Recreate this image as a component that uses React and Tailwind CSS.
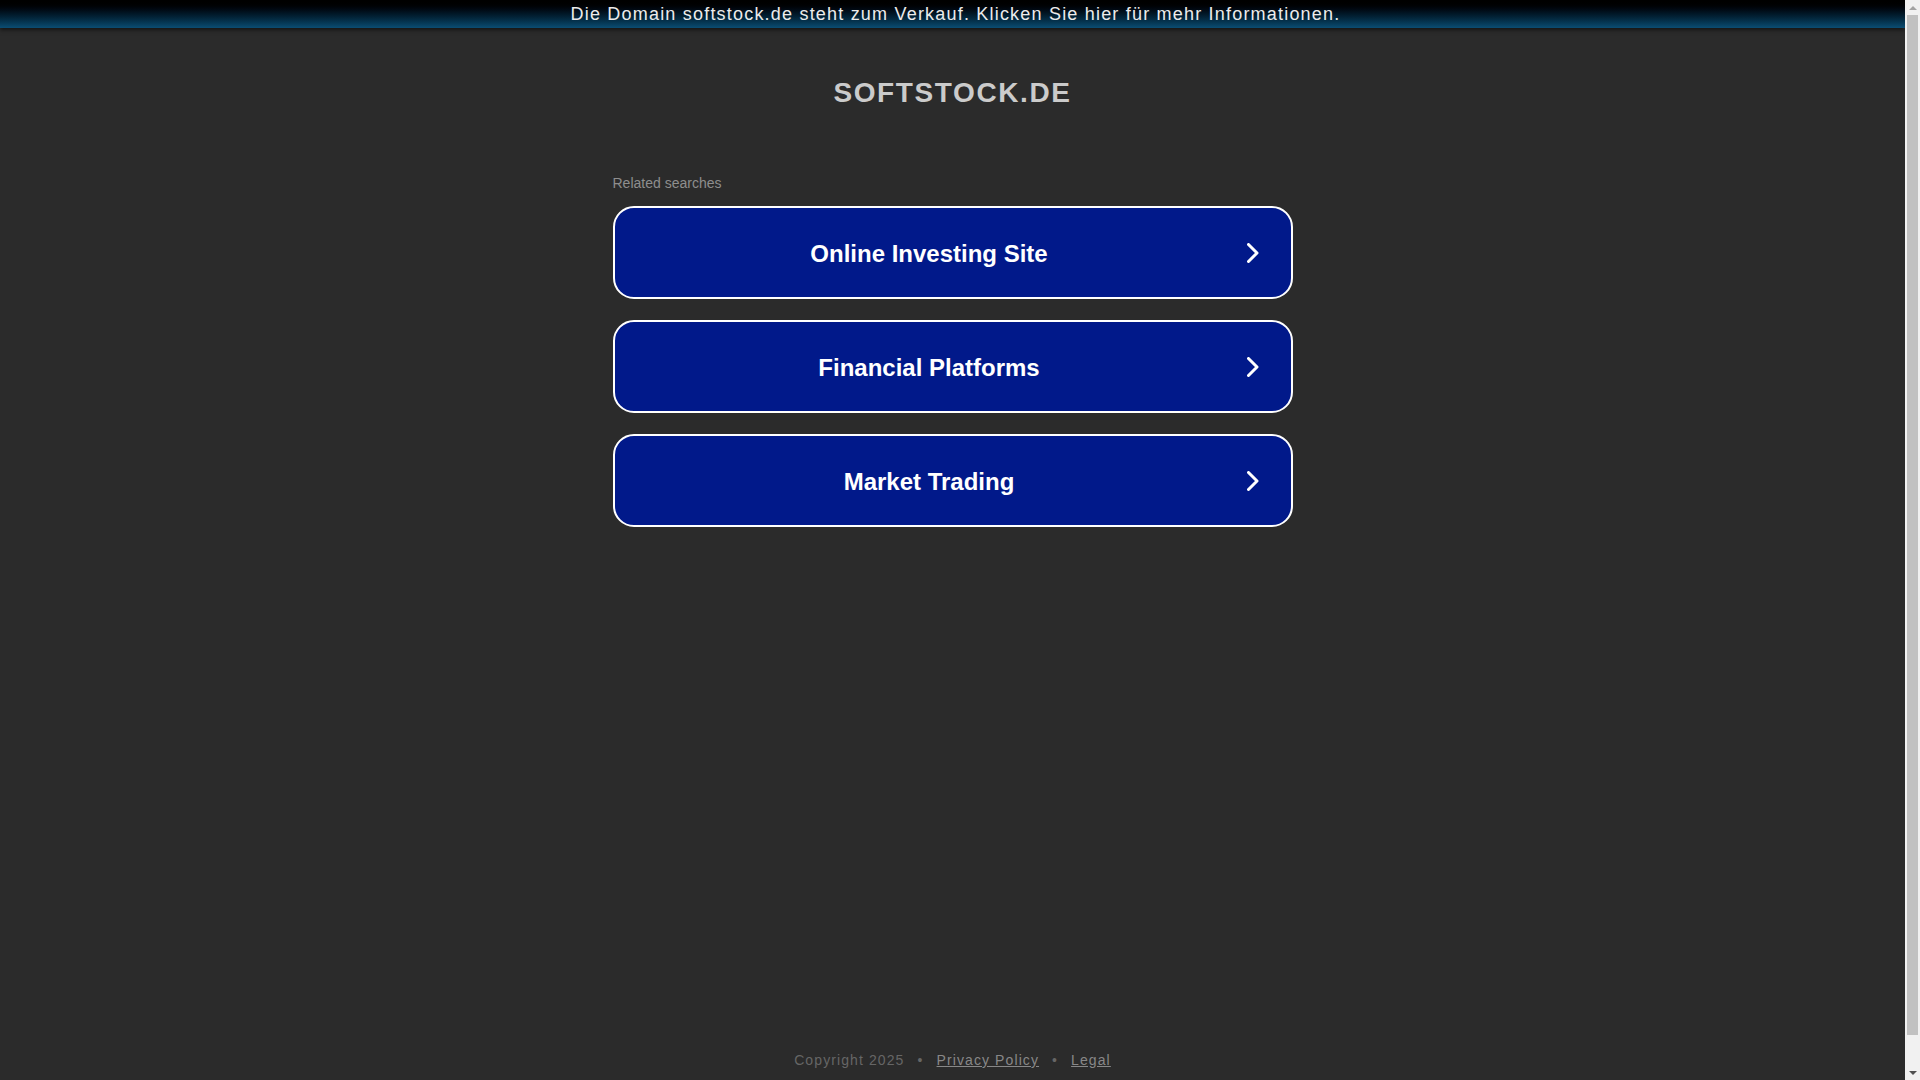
const searches = ['Online Investing Site', 'Financial Platforms', 'Market Trading'];

function Chevron() {
  return (
    <svg width="12" height="20" viewBox="0 0 12 20" fill="none" className="shrink-0 mr-[32px]">
      <path d="M1.5 1.5 L10 10 L1.5 18.5" stroke="#ffffff" strokeWidth="3" strokeLinecap="round" strokeLinejoin="round" />
    </svg>
  );
}

function Scrollbar() {
  return (
    <div className="w-[15px] shrink-0 flex flex-col items-center bg-[#f1f1f1]">
      <div className="h-[15px] flex items-center justify-center">
        <div className="w-0 h-0 border-x-[4px] border-x-transparent border-b-[4px] border-b-[#a3a3a3]" />
      </div>
      <div className="w-[11px] h-[1020px] bg-[#c1c1c1]" />
      <div className="mt-auto h-[15px] flex items-center justify-center">
        <div className="w-0 h-0 border-x-[4px] border-x-transparent border-t-[4px] border-t-[#505050]" />
      </div>
    </div>
  );
}

export default function App() {
  return (
    <div className="h-screen flex overflow-hidden bg-[#2b2b2b] font-['Liberation_Sans',Arial,sans-serif]">
      <div className="flex-1 min-w-0 flex flex-col">
        {/* sale banner */}
        <div className="h-[28px] flex items-center justify-center bg-gradient-to-b from-[#000000] to-[#0b4d73] shadow-[0_2px_4px_rgba(0,0,0,0.55)] cursor-pointer">
          <span className="pl-[6px] text-[18px] leading-[28px] tracking-[1.2px] text-[#ececec] whitespace-nowrap">
            Die Domain softstock.de steht zum Verkauf. Klicken Sie hier für mehr Informationen.
          </span>
        </div>

        <main className="w-[680px] mx-auto flex flex-col">
          <h1 className="mt-[48px] text-center text-[28px] leading-[34px] font-bold tracking-[1.6px] text-[#cbcbcb]">
            SOFTSTOCK.DE
          </h1>

          <p className="mt-[65px] text-[14px] leading-[16px] text-[#8e8e8e]">Related searches</p>

          <div className="mt-[15px] flex flex-col gap-[21px]">
            {searches.map((s) => (
              <a
                key={s}
                href="#"
                className="h-[93px] flex items-center rounded-[21px] border-2 border-white bg-[#01198a] text-white"
              >
                <span className="flex-1 pt-[2px] pr-[3px] text-center text-[24px] font-bold leading-[28px]">{s}</span>
                <Chevron />
              </a>
            ))}
          </div>
        </main>

        <footer className="mt-auto pb-[11px] flex justify-center text-[14px] leading-[18px] tracking-[1.1px]">
          <span className="text-[#666666]">Copyright 2025</span>
          <span className="mx-[13px] text-[#666666]">•</span>
          <a href="#" className="text-[#888888] underline">Privacy Policy</a>
          <span className="mx-[13px] text-[#666666]">•</span>
          <a href="#" className="text-[#888888] underline">Legal</a>
        </footer>
      </div>
      <Scrollbar />
    </div>
  );
}
